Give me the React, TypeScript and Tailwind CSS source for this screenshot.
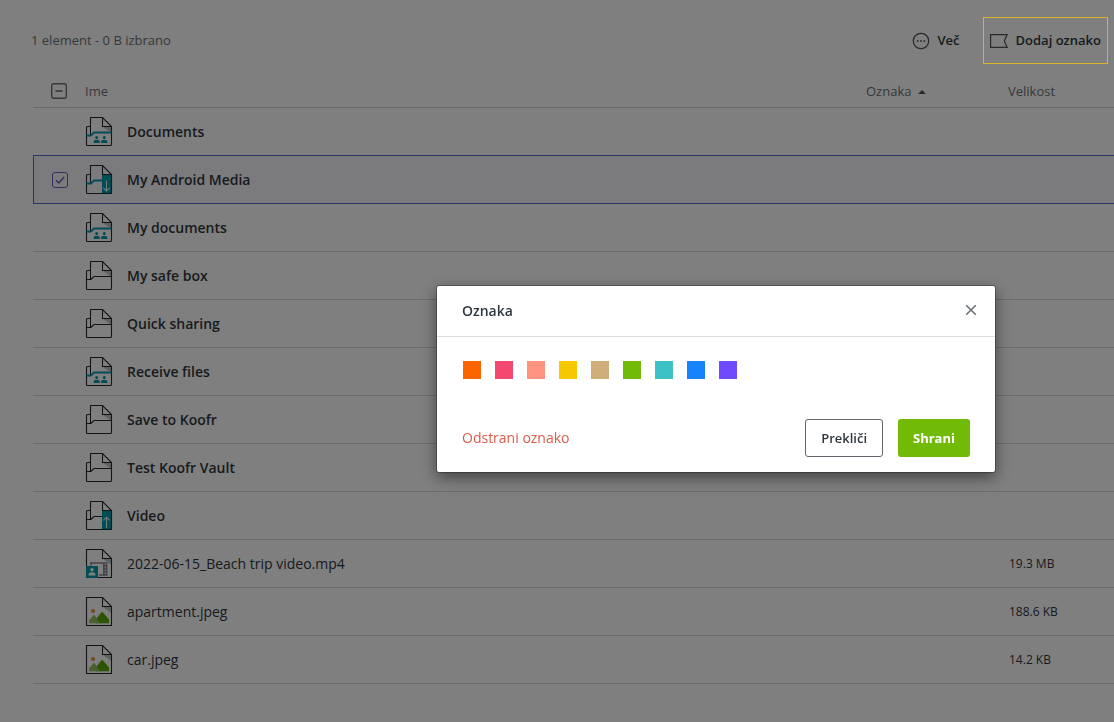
import { useState } from "react";

type IconKind = "folder" | "shared" | "download" | "upload" | "video" | "image";

type Item = {
  name: string;
  icon: IconKind;
  size?: string;
};

const items: Item[] = [
  { name: "Documents", icon: "shared" },
  { name: "My Android Media", icon: "download" },
  { name: "My documents", icon: "shared" },
  { name: "My safe box", icon: "folder" },
  { name: "Quick sharing", icon: "folder" },
  { name: "Receive files", icon: "shared" },
  { name: "Save to Koofr", icon: "folder" },
  { name: "Test Koofr Vault", icon: "folder" },
  { name: "Video", icon: "upload" },
  { name: "2022-06-15_Beach trip video.mp4", icon: "video", size: "19.3 MB" },
  { name: "apartment.jpeg", icon: "image", size: "188.6 KB" },
  { name: "car.jpeg", icon: "image", size: "14.2 KB" },
];

const tags = [
  { label: "Oranžna", className: "bg-[#fb6500]" },
  { label: "Rdeča", className: "bg-[#f3486f]" },
  { label: "Roza", className: "bg-[#ff9480]" },
  { label: "Rumena", className: "bg-[#f6c800]" },
  { label: "Rjava", className: "bg-[#cfae79]" },
  { label: "Zelena", className: "bg-[#71ba05]" },
  { label: "Turkizna", className: "bg-[#3cc1c7]" },
  { label: "Modra", className: "bg-[#1682fb]" },
  { label: "Vijolična", className: "bg-[#6f4bfd]" },
];

export default function App() {
  const [selected, setSelected] = useState("My Android Media");
  const [open, setOpen] = useState(true);

  return (
    <div className="min-h-screen bg-white font-['Open_Sans',sans-serif] text-[#30373d]">
      <main className="pt-[17px]">
        <div className="mb-3 flex h-[47px] items-center pl-[31px] pr-[6px]">
          <p className="flex-1 text-[13px] text-[#6c7278]">1 element - 0 B izbrano</p>
          <button className="mr-[23px] flex items-center gap-2 text-[13px] font-semibold">
            <IconMore />
            Več
          </button>
          <button className="relative flex h-full items-center gap-2 px-[7px] text-[13px] font-semibold" onClick={() => setOpen(true)}>
            <IconTag />
            Dodaj oznako
            <span className="pointer-events-none absolute inset-0 z-20 border border-[#dcb228]" />
          </button>
        </div>

        <div className="pl-[33px]">
          <table className="w-full table-fixed border-separate border-spacing-0 text-left">
            <colgroup>
              <col className="w-[52px]" />
              <col />
              <col className="w-[142px]" />
              <col className="w-[106px]" />
            </colgroup>
            <thead>
              <tr className="h-8 text-[13px] text-[#6c7278] *:border-b *:border-[#d0d2d4] *:p-0 *:font-normal">
                <th>
                  <button className="ml-[18px] block pb-px" aria-label="Izberi vse">
                    <svg viewBox="0 0 16 16" className="h-4 w-4" fill="none" stroke="#6c7278" strokeWidth="1.4">
                      <rect x="0.7" y="0.7" width="14.6" height="14.6" rx="2" />
                      <path d="M4.5 8h7" strokeWidth="1.6" />
                    </svg>
                  </button>
                </th>
                <th>Ime</th>
                <th>
                  <button className="flex items-center gap-[7px]">
                    Oznaka
                    <svg viewBox="0 0 8 4" className="h-1 w-2" fill="#50565c">
                      <path d="M0 4l4-4 4 4z" />
                    </svg>
                  </button>
                </th>
                <th>Velikost</th>
              </tr>
            </thead>
            <tbody>
              {items.map((item, i) => {
                const active = item.name === selected;
                const edge = active || items[i + 1]?.name === selected;
                return (
                  <tr
                    key={item.name}
                    className={`group h-12 *:border-b ${active ? "bg-[#f6f6fa]" : ""} ${edge ? "*:border-[#5868c8]" : "*:border-[#d6d8da]"}`}
                  >
                    <td className={active ? "border-l p-0" : "p-0"}>
                      <label className={`relative ml-[18px] block h-4 w-4 ${active ? "" : "opacity-0 group-hover:opacity-100"}`}>
                        <input
                          type="checkbox"
                          aria-label={item.name}
                          checked={active}
                          onChange={() => setSelected(active ? "" : item.name)}
                          className="block h-4 w-4 appearance-none rounded-[3px] border border-[#6a62c4]"
                        />
                        <svg viewBox="0 0 16 16" className="pointer-events-none absolute inset-0 h-4 w-4" fill="none" stroke="#6a62c4" strokeWidth="1.5">
                          {active && <path d="M4 8.2l2.8 2.8L12.2 5" />}
                        </svg>
                      </label>
                    </td>
                    <td className="p-0">
                      <a href="#" className={`flex items-center gap-[14px] text-sm ${item.size ? "" : "font-semibold"}`}>
                        <FileIcon kind={item.icon} />
                        {item.name}
                      </a>
                    </td>
                    <td className="p-0" />
                    <td className="py-0 pl-px pr-0 text-xs">{item.size}</td>
                  </tr>
                );
              })}
            </tbody>
          </table>
        </div>
      </main>

      {open && (
        <>
          <div className="fixed inset-0 z-10 bg-black/50" />
          <div className="fixed inset-0 z-30 flex items-start justify-end pl-4 pr-[119px] pt-[286px]">
            <TagDialog onClose={() => setOpen(false)} />
          </div>
        </>
      )}
    </div>
  );
}

function TagDialog({ onClose }: { onClose: () => void }) {
  return (
    <div role="dialog" aria-labelledby="tag-title" className="w-full max-w-[558px] rounded-[2px] bg-white shadow-[0_0_0_1px_rgba(0,0,0,0.25),0_5px_15px_rgba(0,0,0,0.5)]">
      <div className="flex items-center justify-between border-b border-[#dcdedf] py-[15px] pl-[25px] pr-[18px]">
        <h2 id="tag-title" className="text-sm font-semibold">Oznaka</h2>
        <button aria-label="Zapri" onClick={onClose} className="pb-0.5">
          <svg viewBox="0 0 12 12" className="h-3 w-3" fill="none" stroke="#6c7277" strokeWidth="1.6">
            <path d="M1.2 1.2l9.6 9.6M10.8 1.2l-9.6 9.6" />
          </svg>
        </button>
      </div>
      <div className="flex gap-3 px-[25px] pt-[23px]">
        {tags.map((tag) => (
          <button key={tag.label} aria-label={tag.label} className={`h-5 w-5 bg-clip-content p-px ${tag.className}`} />
        ))}
      </div>
      <div className="mt-[39px] flex items-center px-[25px] pb-[15px]">
        <button className="text-sm text-[#dd5a48]">Odstrani oznako</button>
        <button onClick={onClose} className="ml-auto h-[38px] rounded-[3px] border border-[#60666b] px-[15px] pt-0.5 text-[13px] font-semibold">
          Prekliči
        </button>
        <button onClick={onClose} className="ml-[15px] h-[38px] rounded-[3px] bg-[#71ba05] px-[15px] pt-0.5 text-[13px] font-bold text-white">
          Shrani
        </button>
      </div>
    </div>
  );
}

function FileIcon({ kind }: { kind: IconKind }) {
  const isFile = kind === "video" || kind === "image";
  const teal = "#009cab";

  return (
    <svg viewBox="0 0 28 31" className="h-[31px] w-7 shrink-0" fill="none" stroke="#25292d" strokeWidth="1.1">
      <path d="M18 11h8.5v6z" fill="#c0c3c6" stroke="none" />
      {isFile ? (
        <path d="M1.5 1.5h16l9 9v19h-25z" />
      ) : (
        <>
          <path d="M5.5 19.5v-18h12l9 9v18q0 1-1 1h-23q-1 0-1-1v-17q0-1 1-1h3" />
          <path
            d="M1.5 19.5H6l3-3h17.5"
            stroke={kind === "shared" || kind === "download" ? teal : "#25292d"}
            strokeWidth={kind === "shared" || kind === "download" ? 1.8 : 1.1}
          />
        </>
      )}
      {kind === "shared" && (
        <g fill={teal} stroke="none">
          <circle cx="11.7" cy="21.6" r="1.5" />
          <circle cx="19.3" cy="21.6" r="1.5" />
          <path d="M8.6 27v-1.4q0-1.8 3.1-1.8t3.1 1.8V27zM16.2 27v-1.4q0-1.8 3.1-1.8t3.1 1.8V27z" />
        </g>
      )}
      {(kind === "download" || kind === "upload") && (
        <>
          <path d="M17 10.5h9.5v18q0 1-1 1H17z" fill={teal} stroke="none" />
          <path d="M26.5 10.5v18q0 1-1 1H17" />
          <path d={kind === "download" ? "M21.5 16.5V27M18.3 23.8l3.2 3.2 3.2-3.2" : "M21.5 28V17.2M18.3 20.4l3.2-3.2 3.2 3.2"} stroke="#e4f6f7" />
        </>
      )}
      {kind === "video" && (
        <>
          <path d="M6 15h12M6 14v3.5M14 27h5" stroke="#85898d" strokeWidth="1.6" />
          <path d="M18 14.2h4.5v13.6H18z" fill="#85898d" stroke="none" />
          <path d="M20.4 15.5v12" stroke="#e6e7e8" strokeWidth="1.6" strokeDasharray="1.6 1.4" />
          <path d="M1 18h12v12H1z" fill={teal} stroke="none" />
          <circle cx="7" cy="21.8" r="1.7" fill="#fff" stroke="none" />
          <path d="M3.6 27.6v-1.3q0-2 3.4-2t3.4 2v1.3z" fill="#fff" stroke="none" />
        </>
      )}
      {kind === "image" && (
        <g stroke="none">
          <circle cx="8" cy="15" r="2.1" fill="#e0983c" />
          <path d="M10.8 27.2v-4l6.2-7.7 7 7.7v4z" fill="#5aa806" />
          <path d="M4 27.2v-3l5.2-5.4 5.8 8.4z" fill="#8cc35c" />
        </g>
      )}
      <path d="M17.5 1.5v9h9" />
    </svg>
  );
}

function IconMore() {
  return (
    <svg viewBox="0 0 18 18" className="h-[18px] w-[18px]" fill="none" stroke="#50565c" strokeWidth="1.3">
      <circle cx="9" cy="9" r="7.7" />
      <path d="M4.7 9h1.8M8.1 9h1.8M11.5 9h1.8" strokeWidth="1.6" />
    </svg>
  );
}

function IconTag() {
  return (
    <svg viewBox="0 0 18 14" className="h-[14px] w-[18px]" fill="none" stroke="#50565c" strokeWidth="1.2">
      <path d="M0.6 0.6h16.6L14.3 7l2.9 6.4H0.6z" />
    </svg>
  );
}
